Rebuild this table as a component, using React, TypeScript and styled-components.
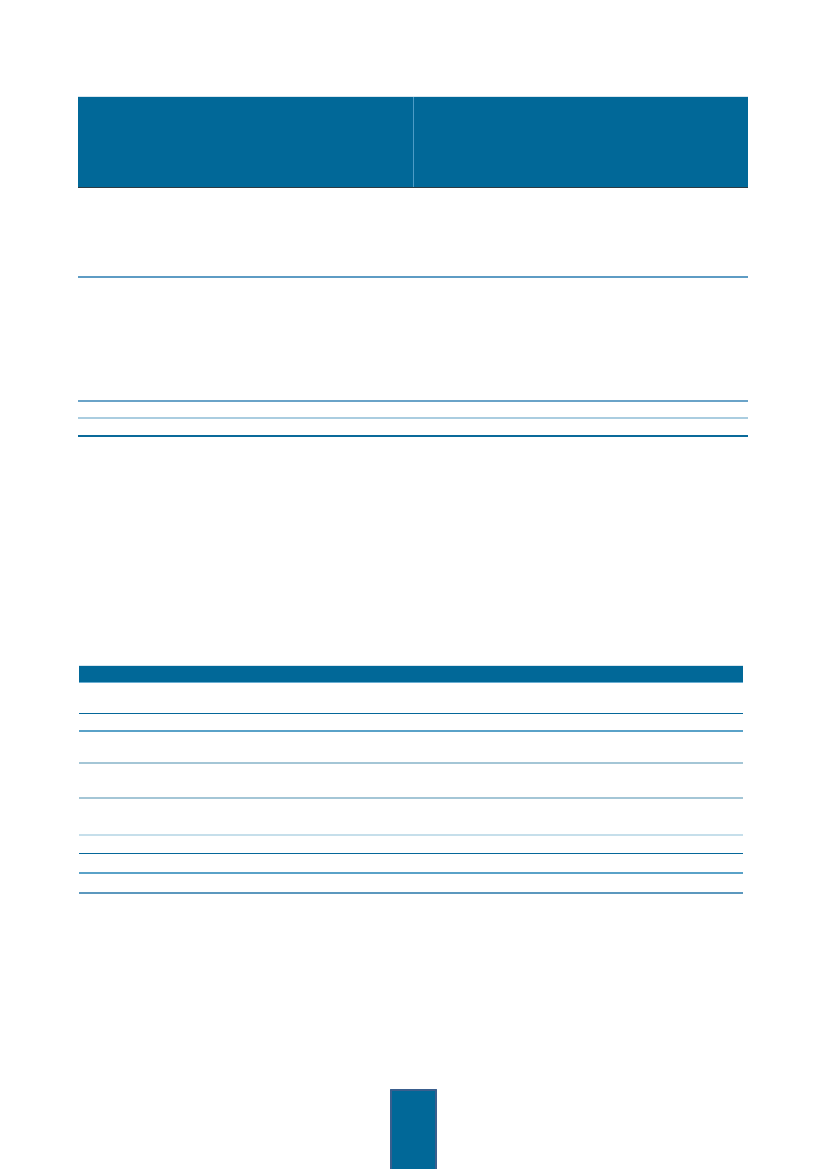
import React from 'react';
import styled, { createGlobalStyle } from 'styled-components';

const GlobalStyle = createGlobalStyle`
  html, body {
    margin: 0;
    padding: 0;
    background: #ffffff;
    font-family: "Liberation Sans", Arial, sans-serif;
  }
`;

const Page = styled.div`
  width: 827px;
  height: 1169px;
  box-sizing: border-box;
  padding-top: 96px;
  display: flex;
  flex-direction: column;
  overflow: hidden;
`;

const Table = styled.div<{ $left: number; $width: number }>`
  margin-left: ${(p) => p.$left}px;
  width: ${(p) => p.$width}px;
  display: flex;
  flex-direction: column;
`;

const HeadRow = styled.div<{ $h: number; $cols: string; $bottom: string }>`
  display: grid;
  grid-template-columns: ${(p) => p.$cols};
  height: ${(p) => p.$h}px;
  background: #016898;
  border-top: 1px solid #d8e6ee;
  border-bottom: 1px solid ${(p) => p.$bottom};
  box-sizing: border-box;
`;

const HeadCell = styled.div<{ $divider?: boolean }>`
  border-left: ${(p) => (p.$divider ? '1px solid #4d9cc6' : 'none')};
`;

const Row = styled.div<{ $h: number; $line: string; $thick?: number; $cols: string }>`
  display: grid;
  grid-template-columns: ${(p) => p.$cols};
  column-gap: 1px;
  height: ${(p) => p.$h}px;
  box-sizing: border-box;
  border-bottom: ${(p) => p.$thick ?? 1}px solid ${(p) => p.$line};
`;

const Gap = styled.div<{ $h: number }>`
  height: ${(p) => p.$h}px;
  flex-shrink: 0;
`;

const Tab = styled.div`
  margin-left: 390px;
  width: 47px;
  height: 80px;
  box-sizing: border-box;
  background: #016898;
  border: 2px solid #3a5f8e;
  border-bottom: none;
  border-radius: 1px 1px 0 0;
`;

const table1Rows = [
  { h: 90, line: '#5e9cc4', thick: 2 },
  { h: 124, line: '#6aa3c8', thick: 2 },
  { h: 17, line: '#aacde0', thick: 2 },
  { h: 18, line: '#0a6a9a', thick: 2 },
];

const table2Rows = [
  { h: 31, line: '#05679a', thick: 1 },
  { h: 18, line: '#5aa2c8', thick: 2 },
  { h: 32, line: '#a4c6d6', thick: 2 },
  { h: 35, line: '#a4c6d6', thick: 2 },
  { h: 37, line: '#c6dfeb', thick: 2 },
  { h: 18, line: '#05679a', thick: 1 },
  { h: 20, line: '#5aa2c8', thick: 2 },
  { h: 20, line: '#5c98be', thick: 2 },
];

export default function App() {
  return (
    <Page>
      <GlobalStyle />
      <Table $left={78} $width={670}>
        <HeadRow $h={92} $cols="335px 335px" $bottom="#2c3c44">
          <HeadCell />
          <HeadCell $divider />
        </HeadRow>
        {table1Rows.map((r, i) => (
          <Row key={i} $h={r.h} $line={r.line} $thick={r.thick} $cols="repeat(4, 1fr)">
            <div />
            <div />
            <div />
            <div />
          </Row>
        ))}
      </Table>
      <Gap $h={228} />
      <Table $left={79} $width={664}>
        <HeadRow $h={18} $cols="543px 121px" $bottom="#6aaed2">
          <HeadCell />
          <HeadCell />
        </HeadRow>
        {table2Rows.map((r, i) => (
          <Row key={i} $h={r.h} $line={r.line} $thick={r.thick} $cols="542px 121px">
            <div />
            <div />
          </Row>
        ))}
      </Table>
      <Gap $h={195} />
      <Tab />
    </Page>
  );
}
